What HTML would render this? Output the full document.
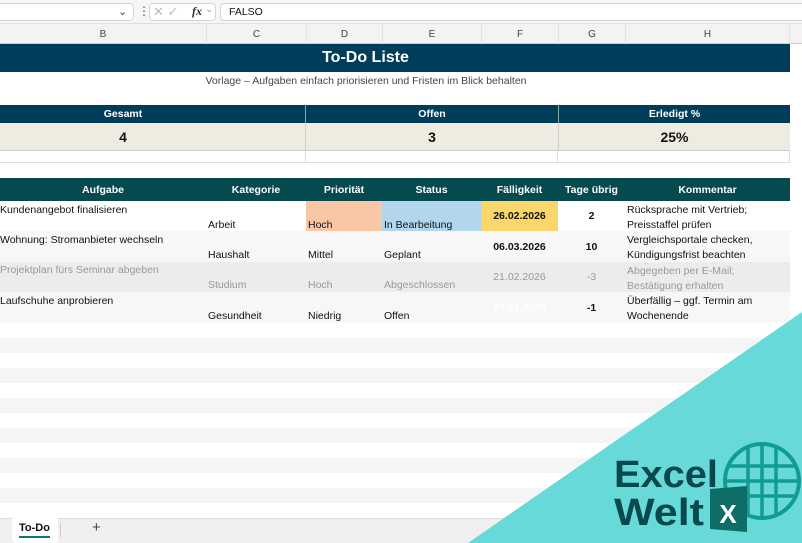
<!DOCTYPE html>
<html><head><meta charset="utf-8"><style>
*{margin:0;padding:0;box-sizing:border-box}
body{width:802px;height:543px;overflow:hidden;background:#fff;font-family:"Liberation Sans",sans-serif;position:relative;font-size:11px;color:#111}
.a{position:absolute}
.c{position:absolute;display:flex;align-items:center;justify-content:center}
.hd{font-weight:bold;color:#fff;font-size:10.5px}
</style></head><body>
<!-- formula bar -->
<div class="a" style="left:0;top:0;width:802px;height:24px;background:#f6f6f6;border-bottom:1px solid #ddd"></div>
<div class="a" style="left:0;top:3px;width:134px;height:18px;background:#fff;border:1px solid #d6d6d6;border-left:none;border-radius:0 4px 4px 0"></div>
<div class="a" style="left:118px;top:5px;font-size:11px;color:#444">&#8964;</div>
<div class="a" style="left:138px;top:4px;color:#555;font-size:12px">⋮</div>
<div class="a" style="left:149px;top:3px;width:67px;height:18px;background:#fff;border:1px solid #d6d6d6;border-radius:4px"></div>
<div class="a" style="left:153px;top:4px;color:#bbb;font-size:13px">✕ ✓</div>
<div class="a" style="left:192px;top:4px;font-family:'Liberation Serif',serif;font-style:italic;font-weight:bold;font-size:12px;color:#333">fx</div>
<div class="a" style="left:205px;top:4px;color:#999;font-size:10px">&#8964;</div>
<div class="a" style="left:220px;top:3px;width:590px;height:18px;background:#fff;border:1px solid #d6d6d6;border-radius:4px"></div>
<div class="a" style="left:229px;top:6px;font-size:10.5px">FALSO</div>
<!-- column headers -->
<div class="a" style="left:0;top:24px;width:802px;height:20px;background:#f3f3f3;border-bottom:1px solid #ccc"></div>
<div class="c" style="left:0;top:24px;width:206px;height:20px;color:#444;font-size:10px">B</div>
<div class="c" style="left:206px;top:24px;width:100px;height:20px;color:#444;font-size:10px;border-left:1px solid #e2e2e2">C</div>
<div class="c" style="left:306px;top:24px;width:76px;height:20px;color:#444;font-size:10px;border-left:1px solid #e2e2e2">D</div>
<div class="c" style="left:382px;top:24px;width:99px;height:20px;color:#444;font-size:10px;border-left:1px solid #e2e2e2">E</div>
<div class="c" style="left:481px;top:24px;width:77px;height:20px;color:#444;font-size:10px;border-left:1px solid #e2e2e2">F</div>
<div class="c" style="left:558px;top:24px;width:67px;height:20px;color:#444;font-size:10px;border-left:1px solid #e2e2e2">G</div>
<div class="c" style="left:625px;top:24px;width:165px;height:20px;color:#444;font-size:10px;border-left:1px solid #e2e2e2;border-right:1px solid #e2e2e2">H</div>
<!-- title -->
<div class="c" style="left:0;top:44px;width:790px;height:28px;background:#003d5a;color:#fff;font-weight:bold;font-size:16px;padding-left:-20px"><span style="margin-left:-59px">To-Do Liste</span></div>
<div class="c" style="left:0;top:72px;width:732px;height:18px;color:#444;font-size:10.5px">Vorlage – Aufgaben einfach priorisieren und Fristen im Blick behalten</div>
<!-- KPIs -->
<div class="a" style="left:0;top:105px;width:790px;height:18px;background:#003d5a"></div>
<div class="c hd" style="left:0;top:105px;width:246px;height:18px">Gesamt</div>
<div class="c hd" style="left:305px;top:105px;width:253px;height:18px;border-left:1px solid #8aa">Offen</div>
<div class="c hd" style="left:558px;top:105px;width:232px;height:18px;border-left:1px solid #8aa">Erledigt %</div>
<div class="a" style="left:0;top:123px;width:790px;height:28px;background:#eeebe1;border-bottom:1px solid #ccc"></div>
<div class="c" style="left:0;top:123px;width:246px;height:28px;font-weight:bold;font-size:14px">4</div>
<div class="c" style="left:305px;top:123px;width:253px;height:28px;font-weight:bold;font-size:14px;border-left:1px solid #ccc">3</div>
<div class="c" style="left:558px;top:123px;width:232px;height:28px;font-weight:bold;font-size:14px;border-left:1px solid #ccc">25%</div>
<div class="a" style="left:0;top:151px;width:790px;height:12px;border-bottom:1px solid #ddd;border-right:1px solid #ddd"></div>
<div class="a" style="left:305px;top:151px;width:253px;height:12px;border-left:1px solid #ddd;border-right:1px solid #ddd"></div>
<!-- table header -->
<div class="a" style="left:0;top:178px;width:790px;height:23px;background:#054a4f"></div>
<div class="c hd" style="left:0;top:178px;width:206px;height:23px">Aufgabe</div>
<div class="c hd" style="left:206px;top:178px;width:100px;height:23px">Kategorie</div>
<div class="c hd" style="left:306px;top:178px;width:76px;height:23px">Priorität</div>
<div class="c hd" style="left:382px;top:178px;width:99px;height:23px">Status</div>
<div class="c hd" style="left:481px;top:178px;width:77px;height:23px">Fälligkeit</div>
<div class="c hd" style="left:558px;top:178px;width:67px;height:23px">Tage übrig</div>
<div class="c hd" style="left:625px;top:178px;width:165px;height:23px">Kommentar</div>
<!-- rows -->
<div class="a" style="left:0;top:231px;width:790px;height:31px;background:#f7f7f7"></div>
<div class="a" style="left:0;top:262px;width:790px;height:30px;background:#ececec"></div>
<div class="a" style="left:0;top:292px;width:790px;height:31px;background:#f7f7f7"></div>
<div class="a" style="left:306px;top:201px;width:76px;height:30px;background:#f9c7a6"></div>
<div class="a" style="left:382px;top:201px;width:99px;height:30px;background:#b1d6ee"></div>
<div class="a" style="left:481px;top:201px;width:77px;height:30px;background:#fbd66a"></div>

<div class="a" style="left:0;top:204px;font-size:10.5px">Kundenangebot finalisieren</div>
<div class="a" style="left:208px;top:219px;font-size:10.5px">Arbeit</div>
<div class="a" style="left:308px;top:219px;font-size:10.5px">Hoch</div>
<div class="a" style="left:384px;top:219px;font-size:10.5px">In Bearbeitung</div>
<div class="c" style="left:481px;top:201px;width:77px;height:30px;font-weight:bold;font-size:10.5px">26.02.2026</div>
<div class="c" style="left:558px;top:201px;width:67px;height:30px;font-weight:bold;font-size:10.5px">2</div>
<div class="a" style="left:627px;top:203px;font-size:10.5px;line-height:15px">Rücksprache mit Vertrieb;<br>Preisstaffel prüfen</div>

<div class="a" style="left:0;top:234px;font-size:10.5px">Wohnung: Stromanbieter wechseln</div>
<div class="a" style="left:208px;top:249px;font-size:10.5px">Haushalt</div>
<div class="a" style="left:308px;top:249px;font-size:10.5px">Mittel</div>
<div class="a" style="left:384px;top:249px;font-size:10.5px">Geplant</div>
<div class="c" style="left:481px;top:231px;width:77px;height:31px;font-weight:bold;font-size:10.5px">06.03.2026</div>
<div class="c" style="left:558px;top:231px;width:67px;height:31px;font-weight:bold;font-size:10.5px">10</div>
<div class="a" style="left:627px;top:233px;font-size:10.5px;line-height:15px">Vergleichsportale checken,<br>Kündigungsfrist beachten</div>

<div class="a" style="left:0;top:264px;font-size:10.5px;color:#999">Projektplan fürs Seminar abgeben</div>
<div class="a" style="left:208px;top:279px;font-size:10.5px;color:#999">Studium</div>
<div class="a" style="left:308px;top:279px;font-size:10.5px;color:#999">Hoch</div>
<div class="a" style="left:384px;top:279px;font-size:10.5px;color:#999">Abgeschlossen</div>
<div class="c" style="left:481px;top:262px;width:77px;height:30px;font-size:10.5px;color:#999">21.02.2026</div>
<div class="c" style="left:558px;top:262px;width:67px;height:30px;font-size:10.5px;color:#999">-3</div>
<div class="a" style="left:627px;top:264px;font-size:10.5px;line-height:15px;color:#999">Abgegeben per E-Mail;<br>Bestätigung erhalten</div>

<div class="a" style="left:0;top:295px;font-size:10.5px">Laufschuhe anprobieren</div>
<div class="a" style="left:208px;top:310px;font-size:10.5px">Gesundheit</div>
<div class="a" style="left:308px;top:310px;font-size:10.5px">Niedrig</div>
<div class="a" style="left:384px;top:310px;font-size:10.5px">Offen</div>
<div class="c" style="left:481px;top:292px;width:77px;height:31px;font-size:10.5px;color:#fff;font-weight:bold">23.02.2026</div>
<div class="c" style="left:558px;top:292px;width:67px;height:31px;font-weight:bold;font-size:10.5px">-1</div>
<div class="a" style="left:627px;top:294px;font-size:10.5px;line-height:15px">Überfällig – ggf. Termin am<br>Wochenende</div>
<!-- stripes -->
<div class="a" style="left:0;top:323px;width:790px;height:195px;background:repeating-linear-gradient(#fff 0 15px,#f5f5f5 15px 30px)"></div>
<!-- tabs -->
<div class="a" style="left:0;top:518px;width:802px;height:25px;background:#f0f0f0;border-top:1px solid #ddd"></div>
<div class="a" style="left:12px;top:518px;width:46px;height:25px;background:#fff;border-radius:0 0 4px 4px"></div>
<div class="a" style="left:19px;top:522px;font-weight:bold;font-size:11px">To-Do</div>
<div class="a" style="left:19px;top:536px;width:31px;height:2px;background:#0e7a6e"></div>
<div class="a" style="left:60px;top:523px;width:1px;height:14px;background:#ccc"></div>
<div class="a" style="left:92px;top:519px;font-size:15px;color:#444">+</div>
<!-- triangle + logo -->
<svg class="a" style="left:0;top:0" width="802" height="543">
<polygon points="802,312 802,543 468,543" fill="#66d9d8"/>
<circle cx="762" cy="481" r="37" fill="none" stroke="#119c92" stroke-width="4"/>
<g stroke="#119c92" stroke-width="3.5">
<line x1="748" y1="446" x2="748" y2="516"/><line x1="762" y1="444" x2="762" y2="518"/><line x1="776" y1="446" x2="776" y2="516"/>
<line x1="728" y1="466" x2="796" y2="466"/><line x1="726" y1="481" x2="798" y2="481"/><line x1="728" y1="496" x2="796" y2="496"/>
</g>
<polygon points="710,489 747,486 747,532 710,529" fill="#0d6e67"/>
<text x="728" y="523" text-anchor="middle" font-family="Liberation Sans" font-weight="bold" font-size="26" fill="#fff">X</text>
<text x="614" y="487" font-family="Liberation Sans" font-weight="bold" font-size="38" fill="#07494d" textLength="104" lengthAdjust="spacingAndGlyphs">Excel</text>
<text x="614" y="525" font-family="Liberation Sans" font-weight="bold" font-size="38" fill="#07494d" textLength="90" lengthAdjust="spacingAndGlyphs">Welt</text>
</svg>
</body></html>
